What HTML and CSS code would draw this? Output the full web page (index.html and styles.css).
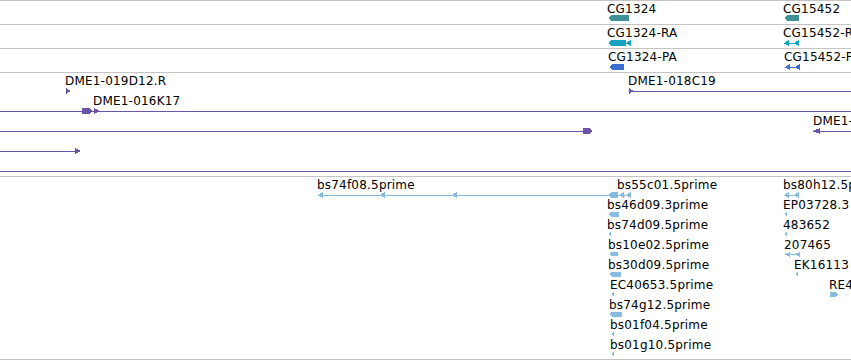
FILE: index.html
```html
<!DOCTYPE html>
<html lang="en">
<head>
    <meta charset="UTF-8">
    <title>Track view</title>
    <link rel="stylesheet" href="styles.css">
</head>
<body>
    <div class="tracks">
        <!-- gene -->
        <div class="track row">
            <svg class="canvas" width="851" height="23" viewBox="0 1 851 23">
                <text class="label" x="607" y="13">CG1324</text>
                <polygon class="gene" points="608,18 612,15 629,15 629,21 612,21"/>
                <text class="label" x="783" y="13">CG15452</text>
                <polygon class="gene" points="784,18 788,15 799,15 799,21 788,21"/>
            </svg>
        </div>

        <!-- transcript -->
        <div class="track row">
            <svg class="canvas" width="851" height="23" viewBox="0 25 851 23">
                <text class="label" x="607" y="37">CG1324-RA</text>
                <polygon class="mrna" points="608,43 612,40 626,40 626,46 612,46"/>
                <rect class="mrna" x="626" y="43" width="5" height="1"/>
                <polygon class="mrna" points="626,43 631,40 631,46"/>
                <text class="label" x="783" y="37">CG15452-RA</text>
                <rect class="mrna" x="784" y="43" width="15" height="1"/>
                <polygon class="mrna" points="784,43 789,40 789,46"/>
                <polygon class="mrna" points="794,43 799,40 799,46"/>
            </svg>
        </div>

        <!-- protein -->
        <div class="track row">
            <svg class="canvas" width="851" height="23" viewBox="0 49 851 23">
                <text class="label" x="608" y="61">CG1324-PA</text>
                <polygon class="cds" points="609,67 613,64 624,64 624,70 613,70"/>
                <text class="label" x="784" y="61">CG15452-PA</text>
                <rect class="cds" x="785" y="67" width="15" height="1"/>
                <polygon class="cds" points="785,67 790,64 790,70"/>
                <polygon class="cds" points="795,67 800,64 800,70"/>
            </svg>
        </div>

        <!-- BAC clones -->
        <div class="track clones">
            <svg class="canvas" width="851" height="103" viewBox="0 73 851 103">
                <text class="label" x="65" y="85">DME1-019D12.R</text>
                <polygon class="bac" points="66,88 71,91 66,94"/>

                <text class="label" x="628" y="85">DME1-018C19</text>
                <rect class="bac" x="629" y="91" width="222" height="1"/>
                <polygon class="bac" points="629,88 634,91 629,94"/>

                <text class="label" x="93" y="105">DME1-016K17</text>
                <rect class="bac" x="0" y="111" width="851" height="1"/>
                <polygon class="bac" points="82,108 89,108 92,111 89,114 82,114"/>
                <polygon class="bac" points="94,108 100,111 94,114"/>

                <rect class="bac" x="0" y="131" width="586" height="1"/>
                <polygon class="bac" points="583,128 589,128 592,131 589,134 583,134"/>

                <text class="label" x="813" y="125">DME1-</text>
                <rect class="bac" x="813" y="131" width="38" height="1"/>
                <polygon class="bac" points="813,131 820,128 820,134"/>

                <rect class="bac" x="0" y="151" width="78" height="1"/>
                <polygon class="bac" points="75,148 81,151 75,154"/>

                <rect class="bac" x="0" y="171" width="851" height="1"/>
            </svg>
        </div>

        <!-- ESTs -->
        <div class="track ests">
            <svg class="canvas" width="851" height="182" viewBox="0 177 851 182">
                <text class="label" x="317" y="189">bs74f08.5prime</text>
                <rect class="est" x="318" y="195" width="292" height="1"/>
                <polygon class="est" points="318,195 323,192 323,198"/>
                <polygon class="est" points="380,195 385,192 385,198"/>
                <polygon class="est" points="452,195 457,192 457,198"/>

                <text class="label" x="617" y="189">bs55c01.5prime</text>
                <rect class="est" x="608" y="195" width="23" height="1"/>
                <polygon class="est" points="608,195 611,192 618,192 618,198 611,198"/>
                <polygon class="est" points="619,195 624,192 624,198"/>
                <polygon class="est" points="626,195 631,192 631,198"/>

                <text class="label" x="607" y="209">bs46d09.3prime</text>
                <polygon class="est" points="608,214 611,212 619,212 619,217 611,217"/>

                <text class="label" x="607" y="229">bs74d09.5prime</text>
                <polygon class="est" points="608,234 611,232 611,236"/>

                <text class="label" x="608" y="249">bs10e02.5prime</text>
                <polygon class="est" points="609,254 612,252 618,252 618,256 612,256"/>

                <text class="label" x="608" y="269">bs30d09.5prime</text>
                <polygon class="est" points="609,274 612,272 621,272 621,277 612,277"/>

                <text class="label" x="610" y="289">EC40653.5prime</text>
                <polygon class="est" points="611,294 614,292 614,296"/>

                <text class="label" x="609" y="309">bs74g12.5prime</text>
                <polygon class="est" points="609,314 612,312 622,312 622,317 612,317"/>

                <text class="label" x="610" y="329">bs01f04.5prime</text>
                <polygon class="est" points="611,334 614,332 614,336"/>

                <text class="label" x="610" y="349">bs01g10.5prime</text>
                <polygon class="est" points="611,354 614,352 614,356"/>

                <text class="label" x="783" y="189">bs80h12.5prime</text>
                <rect class="est" x="784" y="195" width="15" height="1"/>
                <polygon class="est" points="784,195 789,192 789,198"/>
                <polygon class="est" points="794,195 799,192 799,198"/>

                <text class="label" x="783" y="209">EP03728.3</text>
                <polygon class="est" points="784,214 787,212 787,217"/>

                <text class="label" x="783" y="229">483652</text>
                <polygon class="est" points="784,234 787,232 787,237"/>

                <text class="label" x="784" y="249">207465</text>
                <rect class="est" x="785" y="254" width="15" height="1"/>
                <polygon class="est" points="785,254 790,252 790,257"/>
                <polygon class="est" points="795,254 800,252 800,257"/>

                <text class="label" x="794" y="269">EK16113</text>
                <polygon class="est" points="795,274 798,272 798,277"/>

                <text class="label" x="829" y="289">RE4</text>
                <polygon class="est" points="830,292 835,292 838,294 835,297 830,297"/>
            </svg>
        </div>
    </div>
</body>
</html>
```

FILE: styles.css
```css
body {
    margin: 0;
    background: #ffffff;
    font-family: "DejaVu Sans", Verdana, sans-serif;
    overflow: hidden;
}

.tracks {
    width: 851px;
    display: flex;
    flex-direction: column;
}

.track {
    border-top: 1px solid #c4c4c4;
    overflow: hidden;
}

.track.row {
    height: 23px;
}

.track.clones {
    height: 103px;
}

.track.ests {
    height: 182px;
    border-bottom: 1px solid #c4c4c4;
}

.canvas {
    display: block;
    shape-rendering: crispEdges;
}

.label {
    font-family: "DejaVu Sans", Verdana, sans-serif;
    font-size: 12px;
    letter-spacing: 0.2px;
    fill: #000000;
}

.gene {
    fill: #3d9196;
}

.mrna {
    fill: #14a2c1;
}

.cds {
    fill: #3a6ed2;
}

.bac {
    fill: #6b53a7;
}

.est {
    fill: #87bce0;
}
```
